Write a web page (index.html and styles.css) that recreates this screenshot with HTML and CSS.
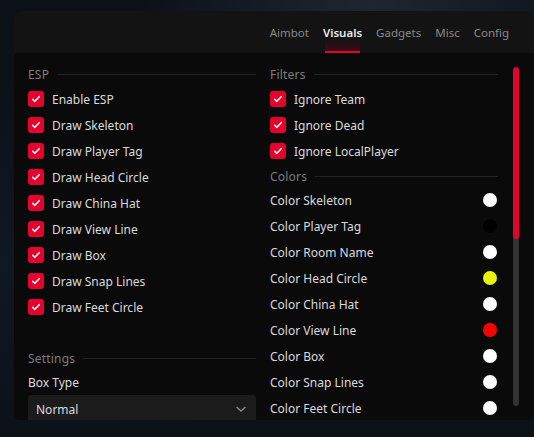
FILE: index.html
```html
<!DOCTYPE html>
<html lang="en">
<head>
<meta charset="utf-8">
<title>Visuals</title>
<link rel="stylesheet" href="styles.css">
</head>
<body>
<div class="window">
  <header class="tabbar">
    <nav class="tabs">
      <span class="tab">Aimbot</span>
      <span class="tab active">Visuals</span>
      <span class="tab">Gadgets</span>
      <span class="tab">Misc</span>
      <span class="tab">Config</span>
    </nav>
  </header>
  <main class="content">
    <div class="columns">
      <section class="col">
        <h3 class="group">ESP</h3>
        <label class="check"><span class="box"><svg viewBox="0 0 16 16"><path d="M4.8 8.3l2.1 2 4.3-4.6"/></svg></span>Enable ESP</label>
        <label class="check"><span class="box"><svg viewBox="0 0 16 16"><path d="M4.8 8.3l2.1 2 4.3-4.6"/></svg></span>Draw Skeleton</label>
        <label class="check"><span class="box"><svg viewBox="0 0 16 16"><path d="M4.8 8.3l2.1 2 4.3-4.6"/></svg></span>Draw Player Tag</label>
        <label class="check"><span class="box"><svg viewBox="0 0 16 16"><path d="M4.8 8.3l2.1 2 4.3-4.6"/></svg></span>Draw Head Circle</label>
        <label class="check"><span class="box"><svg viewBox="0 0 16 16"><path d="M4.8 8.3l2.1 2 4.3-4.6"/></svg></span>Draw China Hat</label>
        <label class="check"><span class="box"><svg viewBox="0 0 16 16"><path d="M4.8 8.3l2.1 2 4.3-4.6"/></svg></span>Draw View Line</label>
        <label class="check"><span class="box"><svg viewBox="0 0 16 16"><path d="M4.8 8.3l2.1 2 4.3-4.6"/></svg></span>Draw Box</label>
        <label class="check"><span class="box"><svg viewBox="0 0 16 16"><path d="M4.8 8.3l2.1 2 4.3-4.6"/></svg></span>Draw Snap Lines</label>
        <label class="check"><span class="box"><svg viewBox="0 0 16 16"><path d="M4.8 8.3l2.1 2 4.3-4.6"/></svg></span>Draw Feet Circle</label>

        <h3 class="group settings">Settings</h3>
        <div class="field-label">Box Type</div>
        <div class="select">
          <span>Normal</span>
          <svg class="chev" viewBox="0 0 12 8"><path d="M1.5 2l4.5 4 4.5-4"/></svg>
        </div>
      </section>

      <section class="col">
        <h3 class="group">Filters</h3>
        <label class="check"><span class="box"><svg viewBox="0 0 16 16"><path d="M4.8 8.3l2.1 2 4.3-4.6"/></svg></span>Ignore Team</label>
        <label class="check"><span class="box"><svg viewBox="0 0 16 16"><path d="M4.8 8.3l2.1 2 4.3-4.6"/></svg></span>Ignore Dead</label>
        <label class="check"><span class="box"><svg viewBox="0 0 16 16"><path d="M4.8 8.3l2.1 2 4.3-4.6"/></svg></span>Ignore LocalPlayer</label>

        <h3 class="group colors">Colors</h3>
        <div class="color-row"><span>Color Skeleton</span><i class="swatch" style="background:#ffffff"></i></div>
        <div class="color-row"><span>Color Player Tag</span><i class="swatch" style="background:#000000"></i></div>
        <div class="color-row"><span>Color Room Name</span><i class="swatch" style="background:#ffffff"></i></div>
        <div class="color-row"><span>Color Head Circle</span><i class="swatch" style="background:#eaf20a"></i></div>
        <div class="color-row"><span>Color China Hat</span><i class="swatch" style="background:#ffffff"></i></div>
        <div class="color-row"><span>Color View Line</span><i class="swatch" style="background:#ff0000"></i></div>
        <div class="color-row"><span>Color Box</span><i class="swatch" style="background:#ffffff"></i></div>
        <div class="color-row"><span>Color Snap Lines</span><i class="swatch" style="background:#ffffff"></i></div>
        <div class="color-row"><span>Color Feet Circle</span><i class="swatch" style="background:#ffffff"></i></div>
      </section>
    </div>
    <div class="scrollbar"><div class="thumb"></div></div>
  </main>
</div>
</body>
</html>
```

FILE: styles.css
```css
* { box-sizing: border-box; }

html, body {
  margin: 0;
  height: 100%;
}

body {
  background:
    radial-gradient(ellipse at 70% 0%, #1f2631 0%, rgba(20,26,34,0) 45%),
    radial-gradient(ellipse at 0% 60%, #101823 0%, rgba(16,24,35,0) 50%),
    #0c1118;
  font-family: "Noto Sans", "DejaVu Sans", sans-serif;
  font-size: 12px;
  color: #d6d6d6;
  padding: 11px 0 0 14px;
  overflow: hidden;
}

.window {
  width: 520px;
  height: 409px;
  background: #0a0a0a;
  border-radius: 6px;
  overflow: hidden;
  display: flex;
  flex-direction: column;
}

/* top tab bar */
.tabbar {
  height: 42px;
  background: #131313;
  display: flex;
  justify-content: flex-end;
  padding-right: 18px;
  flex: none;
}

.tabs {
  display: flex;
}

.tab {
  display: flex;
  align-items: center;
  padding: 0 7px;
  height: 42px;
  color: #8a8a8a;
  font-size: 11.5px;
  position: relative;
}

.tab.active {
  color: #ececec;
  font-weight: 600;
  background: linear-gradient(to bottom, rgba(60, 8, 20, 0) 28px, rgba(70, 10, 24, 0.85) 40px);
  background-size: calc(100% - 18px) 100%;
  background-repeat: no-repeat;
  background-position: center;
}

.tab.active::after {
  content: "";
  position: absolute;
  left: 9px;
  right: 9px;
  bottom: 0;
  height: 2px;
  background: #e4032e;
}

/* body */
.content {
  flex: 1;
  display: flex;
  padding: 12px 15px 0 14px;
  min-height: 0;
}

.columns {
  display: grid;
  grid-template-columns: 228px 228px;
  column-gap: 14px;
  align-content: start;
}

.col {
  display: flex;
  flex-direction: column;
}

.group {
  margin: 0 0 3px 0;
  height: 18px;
  display: flex;
  align-items: center;
  gap: 8px;
  font-size: 12px;
  font-weight: 400;
  color: #7c7c7c;
  letter-spacing: 0.2px;
}

.group::after {
  content: "";
  flex: 1;
  height: 1px;
  background: #222222;
}

.group.settings { margin-top: 29px; }
.group.colors { margin-top: 3px; margin-bottom: 2px; }

.check {
  height: 26px;
  display: flex;
  align-items: center;
  gap: 8px;
  color: #dadada;
}

.box {
  width: 16px;
  height: 16px;
  border-radius: 3px;
  background: #e4032e;
  flex: none;
  display: flex;
}

.box svg {
  width: 16px;
  height: 16px;
  fill: none;
  stroke: #f4f4f4;
  stroke-width: 1.6;
  stroke-linecap: round;
  stroke-linejoin: round;
}

.field-label {
  margin-top: 2px;
  height: 20px;
  display: flex;
  align-items: center;
  color: #dcdcdc;
}

.select {
  margin-top: 3px;
  height: 28px;
  background: #1b1b1b;
  border-radius: 4px;
  display: flex;
  align-items: center;
  justify-content: space-between;
  padding: 0 9px 0 8px;
  color: #dadada;
}

.chev {
  width: 12px;
  height: 8px;
  fill: none;
  stroke: #8a8a8a;
  stroke-width: 1.4;
}

.color-row {
  height: 26px;
  display: flex;
  align-items: center;
  justify-content: space-between;
  padding-right: 1px;
  color: #dadada;
}

.swatch {
  width: 14px;
  height: 14px;
  border-radius: 50%;
  display: block;
}

/* vertical scrollbar */
.scrollbar {
  margin: 2px 0 0 15px;
  width: 6px;
  height: 339px;
  background: #333333;
  border-radius: 3px;
  overflow: hidden;
  flex: none;
}

.thumb {
  height: 172px;
  background: #e4032e;
  border-radius: 3px;
}
```
